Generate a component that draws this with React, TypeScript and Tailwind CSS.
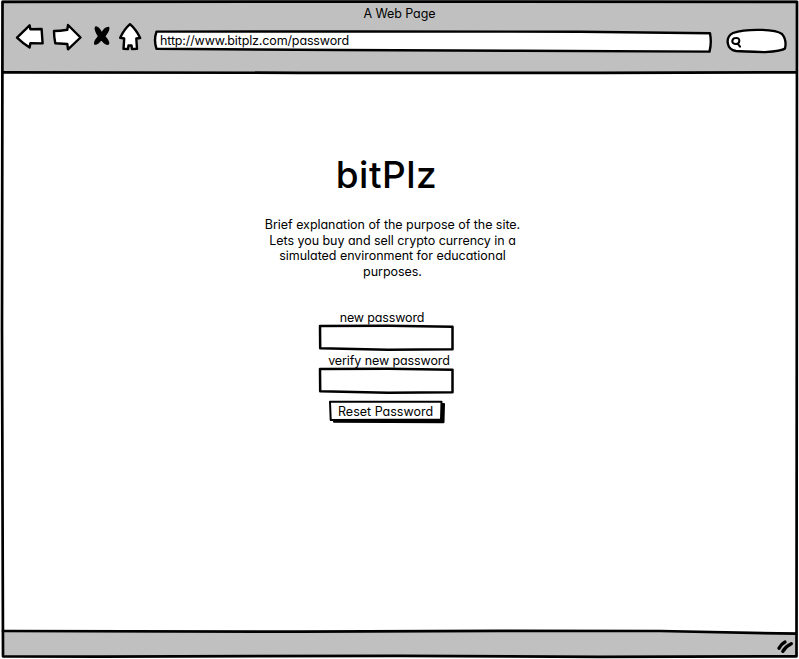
import React from "react";

const stroke = {
  fill: "none",
  stroke: "#000",
  strokeLinecap: "round" as const,
  strokeLinejoin: "round" as const,
};

function Toolbar() {
  return (
    <div className="flex h-[50px] items-start">
      <svg className="ml-[12px] shrink-0" width="130" height="36" viewBox="14 21 130 36" {...stroke} strokeWidth="2.4">
        <path fill="#fff" d="M17 37.7 29.6 25.3 30.4 29.2 41.6 29 42.6 43.4 30.4 43.3 29.6 47.6Q23 43.5 17 37.7Z" />
        <path fill="#fff" d="M54 31Q60 31 67.3 29.8L68 25 80.5 37.5 68 49.3 67.3 44 55.3 43.3Q54 37 54 31Z" />
        <path
          fill="#000"
          strokeWidth="1.2"
          d="M95.5 27Q98 26 101.8 33Q104.5 27.5 108.7 27.3Q110 29 104.8 36.5Q110 42.5 108.5 44Q105.5 45.5 101.3 39.5Q98 44.5 94.8 44.2Q93.5 42 98.5 36.5Q94 29 95.5 27Z"
        />
        <path fill="#fff" d="M130 24.2Q124 29.5 120.2 37.8L124.2 38.5 123.5 48.8 128 49 128.5 45.5 131.5 45.5 132 49 137 48.7 136.3 38.5 140.2 38Q136 29.5 130 24.2Z" />
      </svg>
      <div className="ml-[9px] mt-[9px] grid h-[24px] w-[560px] shrink-0">
        <svg className="col-start-1 row-start-1" width="560" height="24" viewBox="153 30 560 24" {...stroke} strokeWidth="2.4">
          <path fill="#fff" d="M156.5 31.6 350 31.5 580 31.7 710 33.3Q711.8 43 709.5 51.6L520 50.8 340 50 156.5 48.8Q153.5 40 156.5 31.6Z" />
        </svg>
        <span className="col-start-1 row-start-1 pl-[7px] pt-[1px] text-[12.5px] leading-[19px] tracking-[-0.14px]">
          http://www.bitplz.com/password
        </span>
      </div>
      <svg className="ml-[12px] mt-[6px] shrink-0" width="64" height="28" viewBox="725 27 64 28" {...stroke} strokeWidth="2.3">
        <path fill="#fff" d="M733 33Q743 29.5 760 29.8 777 30 782 34 787 40 785 48.5 782 51 765 52.2 743 51.5 736 51 729 50 727.7 43 727 36 733 33Z" />
        <path strokeWidth="2.1" d="M735.5 38Q739.5 37.5 739.3 41 739 44.3 735.5 44 732 43.5 732.3 41 732.8 38 735.5 38ZM738 44 740 46.7" />
      </svg>
    </div>
  );
}

function SketchInput() {
  return (
    <div className="grid h-[27px] w-[136px]">
      <svg className="col-start-1 row-start-1" width="136" height="27" viewBox="0 0 136 27" {...stroke} strokeWidth="2.5">
        <path fill="#fff" d="M2 2 70 1.8 134.5 2.8 134.5 25.3 70 25.7 2.2 24.3Z" />
      </svg>
      <input className="col-start-1 row-start-1 bg-transparent px-2 outline-none" />
    </div>
  );
}

function ResetButton() {
  return (
    <button className="ml-[10px] mt-[6px] grid h-[24px] w-[117px]">
      <svg className="col-start-1 row-start-1" width="117" height="24" viewBox="328 400 117 24" {...stroke} strokeWidth="2">
        <path fill="#000" d="M334 404 444 404 443.5 422.3 334 421.7Z" />
        <path fill="#fff" d="M330 401.7 441.5 401.7 441 419.5 330.7 420Z" />
      </svg>
      <span className="col-start-1 row-start-1 whitespace-nowrap pl-[10px] pt-[2px] text-left text-[12.5px] leading-[19px]">
        Reset Password
      </span>
    </button>
  );
}

function Frame() {
  return (
    <svg className="pointer-events-none absolute inset-0" width="799" height="659" viewBox="0 0 799 659" {...stroke} strokeWidth="2.7">
      <path d="M2.5 1.8 400 1.6 797 1.8 796.8 330 796.5 656.3 600 656.8 400 655.8 100 656.6 3 656.3 2 330Z" />
      <path d="M3 72.3 300 72.8 600 72.8 796 72.3M3 631 300 631.7 500 630.8 660 631 796 633.7" />
    </svg>
  );
}

export default function App() {
  return (
    <div className="relative flex h-[659px] w-[799px] flex-col overflow-hidden bg-white font-['Inter','Liberation_Sans',sans-serif] text-black [font-feature-settings:'cv11']">
      <header className="mx-[2px] h-[72px] shrink-0 bg-[#c0c0c0]">
        <div className="h-[21px] pt-[4px] text-center text-[12.5px] leading-[19px] tracking-[-0.1px]">A Web Page</div>
        <Toolbar />
      </header>
      <main className="flex grow flex-col pt-[80px]">
        <h1 className="w-[773px] text-center text-[37px] font-medium leading-[46px] tracking-[0.5px]">bitPlz</h1>
        <p className="mt-[19px] w-[785px] text-center text-[12.5px] leading-[15.7px] tracking-[-0.04px]">
          Brief explanation of the purpose of the site.
          <br />
          Lets you buy and sell crypto currency in a
          <br />
          simulated environment for educational
          <br />
          purposes.
        </p>
        <form className="ml-[318px] mt-[29px] w-[142px]">
          <label className="block h-[15px] w-[128px] pt-px text-center text-[12.5px] leading-[15px] tracking-[-0.15px]">new password</label>
          <SketchInput />
          <label className="block h-[16px] w-[142px] whitespace-nowrap pt-[2px] text-center text-[12.5px] leading-[15px] tracking-[-0.1px]">
            verify new password
          </label>
          <SketchInput />
          <ResetButton />
        </form>
      </main>
      <footer className="mx-[2px] mb-[2px] flex h-[25px] shrink-0 items-start justify-end bg-[#c0c0c0]">
        <svg className="mr-[2px] mt-[5px]" width="20" height="18" viewBox="775 637 20 18" {...stroke} strokeWidth="3.4">
          <path d="M779 648.3Q781 644 785 642M782.8 651.3Q786 646 791.3 643.7" />
        </svg>
      </footer>
      <Frame />
    </div>
  );
}
